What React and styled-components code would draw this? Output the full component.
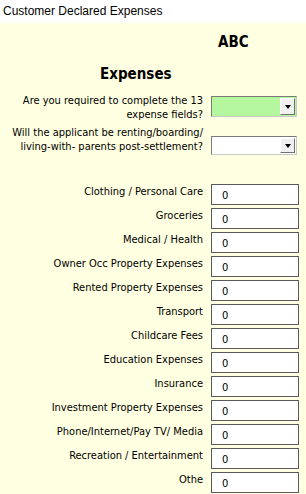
import React from "react";
import styled, { createGlobalStyle } from "styled-components";

const Global = createGlobalStyle`
  html, body { margin: 0; padding: 0; background: #fff; }
  body { width: 306px; height: 494px; overflow: hidden; }
`;

const Page = styled.div`
  width: 306px;
  height: 494px;
  display: flex;
  flex-direction: column;
  overflow: hidden;
`;

const TitleBar = styled.div`
  height: 23px;
  flex: none;
  background: #fff;
  font-family: "Liberation Sans", Arial, sans-serif;
  font-size: 12px;
  line-height: 22px;
  color: #000;
  padding-left: 3px;
`;

const Panel = styled.div`
  flex: 1;
  background: #ffffe1;
  font-family: "DejaVu Sans Condensed", "DejaVu Sans", sans-serif;
  font-size: 11px;
  color: #000;
  padding-top: 10px;
`;

const Heading = styled.div`
  font-family: "DejaVu Sans Condensed", "DejaVu Sans", sans-serif;
  font-weight: bold;
  font-size: 15px;
  line-height: 18px;
  padding-left: ${(p) => p.$left}px;
  margin-bottom: ${(p) => p.$gap}px;
`;

const Grid = styled.div`
  display: grid;
  grid-template-columns: 203px 88px;
  column-gap: 8px;
  align-items: start;
`;

const QLabel = styled.div`
  text-align: right;
  line-height: 14px;
  padding-top: ${(p) => p.$top || 0}px;
`;

const Select = styled.div`
  width: 86px;
  height: ${(p) => p.$h}px;
  margin-top: ${(p) => p.$top}px;
  box-sizing: border-box;
  border: 1px solid #7a7a7a;
  border-right-color: #c8c8c8;
  border-bottom-color: #c8c8c8;
  background: ${(p) => p.$bg};
  display: flex;
  justify-content: flex-end;
  align-items: stretch;
  padding: 1px;
`;

const DropButton = styled.div`
  width: 15px;
  background: #f0f0f0;
  border-left: 1px solid #fff;
  border-top: 1px solid #fff;
  border-right: 1px solid #707070;
  border-bottom: 1px solid #707070;
  box-sizing: border-box;
  display: flex;
  align-items: center;
  justify-content: center;
`;

const Arrow = styled.span`
  width: 0;
  height: 0;
  border-left: 3.5px solid transparent;
  border-right: 3.5px solid transparent;
  border-top: 4px solid #000;
`;

const Spacer = styled.div`
  grid-column: 1 / 3;
  height: ${(p) => p.$h}px;
`;

const FieldLabel = styled.div`
  text-align: right;
  line-height: 14px;
  padding-top: 1px;
  height: 24px;
  box-sizing: border-box;
`;

const Field = styled.div`
  width: 88px;
  height: 21px;
  box-sizing: border-box;
  border: 1px solid #5a5a5a;
  background: #fff;
  font-size: 11px;
  line-height: 19px;
  padding-left: 10px;
  padding-top: 1px;
`;

const fields = [
  "Clothing / Personal Care",
  "Groceries",
  "Medical / Health",
  "Owner Occ Property Expenses",
  "Rented Property Expenses",
  "Transport",
  "Childcare Fees",
  "Education Expenses",
  "Insurance",
  "Investment Property Expenses",
  "Phone/Internet/Pay TV/ Media",
  "Recreation / Entertainment",
  "Othe",
];

export default function App() {
  return (
    <Page>
      <Global />
      <TitleBar>Customer Declared Expenses</TitleBar>
      <Panel>
        <Heading $left={218} $gap={14}>ABC</Heading>
        <Heading $left={100} $gap={10}>Expenses</Heading>
        <Grid>
          <QLabel $top={1}>Are you required to complete the 13<br />expense fields?</QLabel>
          <Select $bg="#b4f79f" $h={21} $top={3}>
            <DropButton><Arrow /></DropButton>
          </Select>
          <QLabel $top={4}>Will the applicant be renting/boarding/<br />living-with- parents post-settlement?</QLabel>
          <Select $bg="#fff" $h={19} $top={14}>
            <DropButton><Arrow /></DropButton>
          </Select>
          <Spacer $h={29} />
          {fields.map((f) => (
            <React.Fragment key={f}>
              <FieldLabel>{f}</FieldLabel>
              <Field>0</Field>
            </React.Fragment>
          ))}
        </Grid>
      </Panel>
    </Page>
  );
}
